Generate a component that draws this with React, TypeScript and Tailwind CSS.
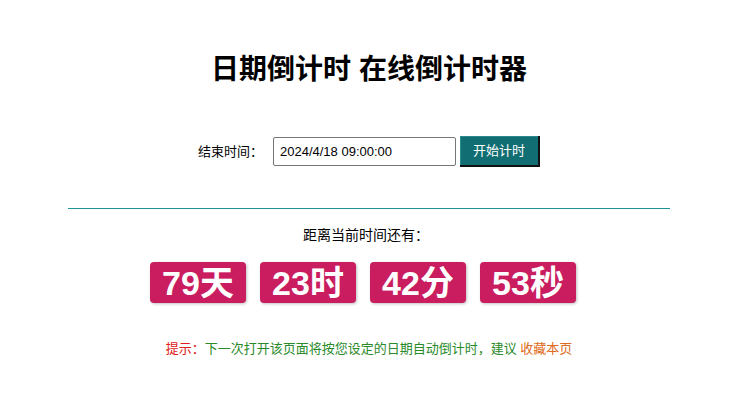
const font = { fontFamily: '"Liberation Sans", "Noto Sans CJK SC", sans-serif' }

const parts = [
  { n: '79', u: '天' },
  { n: '23', u: '时' },
  { n: '42', u: '分' },
  { n: '53', u: '秒' },
]

export default function App() {
  return (
    <div className="w-[742px] h-[401px] bg-white text-black" style={font}>
      <div className="w-[602px] ml-[68px] flex flex-col items-center">
        <h1 className="mt-[52px] text-[28px] leading-[36px] font-bold">日期倒计时 在线倒计时器</h1>

        <div className="mt-[48px] flex items-center text-[13px]">
          <span className="mr-[10px]">结束时间：</span>
          <input
            className="w-[183px] h-[29px] border border-[#767676] rounded-[2px] px-[6px] text-[13px] text-black outline-none"
            defaultValue="2024/4/18 09:00:00"
          />
          <button className="ml-[4px] w-[80px] h-[31px] bg-[#116e72] text-white text-[13px] border-r-2 border-b-2 border-[#111] shadow-[inset_1px_1px_0_#2a8a8e]">
            开始计时
          </button>
        </div>

        <div className="mt-[41px] w-full h-px bg-[#1f9498]" />

        <div className="mt-[17px] pr-[6px] text-[14px] leading-[18px]">距离当前时间还有：</div>

        <div className="mt-[18px] pr-[12px] flex gap-[14px]">
          {parts.map((p) => (
            <div
              key={p.u}
              className="w-[96px] h-[41px] rounded-[4px] bg-[#c91d5f] text-white flex items-center justify-center font-bold text-[34px] leading-none shadow-[1px_1px_3px_rgba(0,0,0,0.25)]"
            >
              {p.n}
              {p.u}
            </div>
          ))}
        </div>

        <div className="mt-[37px] text-[13px] leading-[18px]">
          <span className="text-[#e02020]">提示：</span>
          <span className="text-[#2a8a2a]">下一次打开该页面将按您设定的日期自动倒计时，建议 </span>
          <span className="text-[#e06a20]">收藏本页</span>
        </div>
      </div>
    </div>
  )
}
